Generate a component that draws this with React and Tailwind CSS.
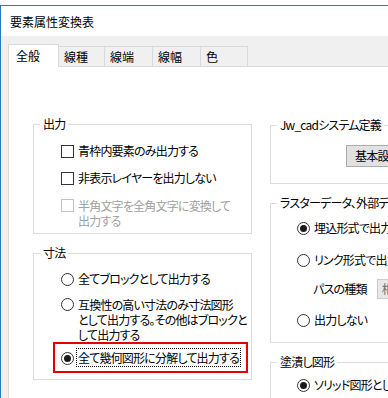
import React from "react";

const font = "[font-family:'Noto_Sans_CJK_JP','Noto_Sans',sans-serif] [font-feature-settings:'palt'] tracking-[-0.8px]";

function CheckBox({ disabled }) {
  return (
    <span
      className={`mt-[1px] block h-[13px] w-[13px] shrink-0 border bg-white ${
        disabled ? "border-[#c4c4c4]" : "border-[#333333]"
      }`}
    />
  );
}

function Radio({ checked }) {
  return (
    <span className="mt-[1px] flex h-[13px] w-[13px] shrink-0 items-center justify-center rounded-full border border-[#333333] bg-white">
      {checked && <span className="block h-[7px] w-[7px] rounded-full bg-[#1a1a1a]" />}
    </span>
  );
}

function Group({ title, className, children }) {
  return (
    <fieldset className="border border-[#dcdcdc]">
      <legend className="ml-[6px] whitespace-nowrap px-[3px] leading-[16px]">{title}</legend>
      <div className={className}>{children}</div>
    </fieldset>
  );
}

const tabs = ["線種", "線端", "線幅", "色"];
const tabWidths = ["w-[46px]", "w-[48px]", "w-[48px]", "w-[47px]"];

export default function App() {
  return (
    <div className={`h-[398px] w-[388px] overflow-hidden bg-white pt-[5px] text-[12px] text-black ${font}`}>
      <div className="flex h-[393px] flex-col border-l border-t border-[#2b79c2]">
        {/* title */}
        <div className="flex h-[30px] shrink-0 items-center bg-white pl-[9px] pt-[1px] tracking-normal">要素属性変換表</div>

        <div className="flex-1 bg-[#f0f0f0] pl-[7px] pt-[8px]">
          {/* tabs */}
          <div className="relative z-10 flex h-[22px] items-end tracking-normal">
            <div className="-mb-[1px] flex h-[23px] w-[51px] items-center border border-b-0 border-[#d9d9d9] bg-white pl-[7px]">
              全般
            </div>
            {tabs.map((t, i) => (
              <div
                key={t}
                className={`flex h-[20px] ${tabWidths[i]} items-center border border-l-0 border-b-0 border-[#d9d9d9] bg-[#f0f0f0] pl-[5px] pt-[1px]`}
              >
                {t}
              </div>
            ))}
          </div>

          {/* panel */}
          <div className="flex h-[400px] w-[500px] gap-[18px] border border-[#d9d9d9] bg-white pl-[24px]">
            {/* left column */}
            <div className="flex w-[219px] shrink-0 flex-col gap-[11px] pt-[49px]">
              <Group title="出力" className="pb-[5px] pl-[27px]">
                <div className="mt-[11px] flex h-[16px] items-center gap-[4px] whitespace-nowrap">
                  <CheckBox />
                  <span>青枠内要素のみ出力する</span>
                </div>
                <div className="mt-[11px] flex h-[16px] items-center gap-[4px] whitespace-nowrap">
                  <CheckBox />
                  <span>非表示レイヤーを出力しない</span>
                </div>
                <div className="mt-[12px] flex items-start gap-[4px] whitespace-nowrap text-[#a0a0a0]">
                  <CheckBox disabled />
                  <span className="leading-[15px]">
                    半角文字を全角文字に変換して
                    <br />
                    出力する
                  </span>
                </div>
              </Group>

              <Group title="寸法" className="pb-[6px]">
                <div className="ml-[27px] mt-[10px] flex h-[16px] items-center gap-[4px] whitespace-nowrap">
                  <Radio />
                  <span>全てブロックとして出力する</span>
                </div>
                <div className="ml-[27px] mt-[10px] flex items-start gap-[4px] whitespace-nowrap leading-[15px]">
                  <Radio />
                  <span>
                    互換性の高い寸法のみ寸法図形
                    <br />
                    として出力する。その他はブロックと
                    <br />
                    して出力する
                  </span>
                </div>
                <div className="ml-[19px] flex h-[31px] w-[195px] items-center whitespace-nowrap border-2 border-[#e50000] pl-[6px]">
                  <Radio checked />
                  <span className="ml-[2px] flex h-[19px] items-center border border-dotted border-black px-[1px]">
                    全て幾何図形に分解して出力する
                  </span>
                </div>
              </Group>
            </div>

            {/* right column */}
            <div className="flex w-[240px] shrink-0 flex-col gap-[11px] pt-[50px]">
              <Group title="Jw_cadシステム定義" className="pb-[16px]">
                <button className="ml-[75px] mt-[12px] flex h-[22px] w-[120px] items-center border border-[#adadad] bg-[#e1e1e1] pl-[8px]">
                  基本設定...
                </button>
              </Group>

              <Group title="ラスターデータ、外部データ参照" className="pb-[14px] pl-[26px]">
                <div className="mt-[9px] flex h-[16px] items-center gap-[4px] whitespace-nowrap">
                  <Radio checked />
                  <span>埋込形式で出力する</span>
                </div>
                <div className="mt-[16px] flex h-[16px] items-center gap-[4px] whitespace-nowrap">
                  <Radio />
                  <span>リンク形式で出力する</span>
                </div>
                <div className="mt-[11px] flex h-[20px] items-center whitespace-nowrap pl-[16px]">
                  <span>パスの種類</span>
                  <span className="ml-[10px] flex h-[20px] w-[80px] items-center border border-[#cccccc] bg-[#e8e8e8] pl-[4px] text-[#6d6d6d]">
                    相対パス
                  </span>
                </div>
                <div className="mt-[13px] flex h-[16px] items-center gap-[4px] whitespace-nowrap">
                  <Radio />
                  <span>出力しない</span>
                </div>
              </Group>

              <Group title="塗潰し図形" className="pb-[10px] pl-[26px]">
                <div className="mt-[7px] flex h-[16px] items-center gap-[4px] whitespace-nowrap">
                  <Radio checked />
                  <span>ソリッド図形として出力する</span>
                </div>
              </Group>
            </div>
          </div>
        </div>
      </div>
    </div>
  );
}
